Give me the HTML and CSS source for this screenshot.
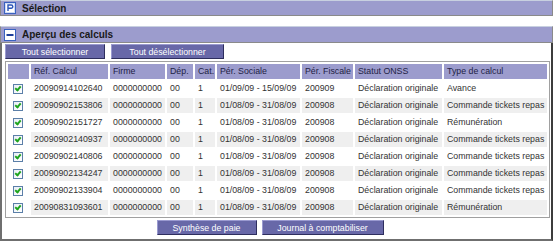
FILE: index.html
```html
<!DOCTYPE html>
<html>
<head>
<meta charset="utf-8">
<link rel="stylesheet" href="styles.css">
</head>
<body>
<div class="page">
  <div class="bar bar-top">
    <svg class="ico" width="12" height="12" viewBox="0 0 12 12"><rect x="0.5" y="0.5" width="11" height="11" fill="#cfdcf5" stroke="#3a62c0"/><rect x="2" y="2" width="8" height="8" fill="#ffffff"/><path d="M4 9V3h3.2a1.6 1.6 0 0 1 0 3.2H4" fill="none" stroke="#2c56b8" stroke-width="1.4"/></svg>
    <span class="bar-title">Sélection</span>
  </div>

  <div class="bar bar-second">
    <svg class="ico" width="12" height="12" viewBox="0 0 12 12"><rect x="0.5" y="0.5" width="11" height="11" fill="#ffffff" stroke="#3a62c0"/><rect x="2.5" y="5" width="7" height="2" fill="#1f3f9a"/></svg>
    <span class="bar-title">Aperçu des calculs</span>
  </div>
  <div class="panel">
    <div class="btn-row">
      <button class="btn w100">Tout sélectionner</button>
      <button class="btn w113">Tout désélectionner</button>
    </div>
    <table class="grid">
      <colgroup>
        <col class="c-chk"><col class="c-ref"><col class="c-firm"><col class="c-dep"><col class="c-cat"><col class="c-soc"><col class="c-fis"><col class="c-stat"><col class="c-type">
      </colgroup>
      <thead>
        <tr><th></th><th>Réf. Calcul</th><th>Firme</th><th>Dép.</th><th>Cat.</th><th>Pér. Sociale</th><th>Pér. Fiscale</th><th>Statut ONSS</th><th>Type de calcul</th></tr>
      </thead>
      <tbody>
        <tr><td class="chk"><span class="cb"></span></td><td>20090914102640</td><td>0000000000</td><td>00</td><td>1</td><td>01/09/09 - 15/09/09</td><td>200909</td><td>Déclaration originale</td><td>Avance</td></tr>
        <tr class="alt"><td class="chk"><span class="cb"></span></td><td>20090902153806</td><td>0000000000</td><td>00</td><td>1</td><td>01/08/09 - 31/08/09</td><td>200908</td><td>Déclaration originale</td><td>Commande tickets repas</td></tr>
        <tr><td class="chk"><span class="cb"></span></td><td>20090902151727</td><td>0000000000</td><td>00</td><td>1</td><td>01/08/09 - 31/08/09</td><td>200908</td><td>Déclaration originale</td><td>Rémunération</td></tr>
        <tr class="alt"><td class="chk"><span class="cb"></span></td><td>20090902140937</td><td>0000000000</td><td>00</td><td>1</td><td>01/08/09 - 31/08/09</td><td>200908</td><td>Déclaration originale</td><td>Commande tickets repas</td></tr>
        <tr><td class="chk"><span class="cb"></span></td><td>20090902140806</td><td>0000000000</td><td>00</td><td>1</td><td>01/08/09 - 31/08/09</td><td>200908</td><td>Déclaration originale</td><td>Commande tickets repas</td></tr>
        <tr class="alt"><td class="chk"><span class="cb"></span></td><td>20090902134247</td><td>0000000000</td><td>00</td><td>1</td><td>01/08/09 - 31/08/09</td><td>200908</td><td>Déclaration originale</td><td>Commande tickets repas</td></tr>
        <tr><td class="chk"><span class="cb"></span></td><td>20090902133904</td><td>0000000000</td><td>00</td><td>1</td><td>01/08/09 - 31/08/09</td><td>200908</td><td>Déclaration originale</td><td>Commande tickets repas</td></tr>
        <tr class="alt"><td class="chk"><span class="cb"></span></td><td>20090831093601</td><td>0000000000</td><td>00</td><td>1</td><td>01/08/09 - 31/08/09</td><td>200908</td><td>Déclaration originale</td><td>Rémunération</td></tr>
      </tbody>
    </table>
    <div class="btn-row center">
      <button class="btn w100">Synthèse de paie</button>
      <button class="btn w122">Journal à comptabiliser</button>
    </div>
  </div>
</div>
</body>
</html>
```

FILE: styles.css
```css
html, body {
  margin: 0;
  padding: 0;
  background: #ffffff;
}
body {
  font-family: "Liberation Sans", Arial, sans-serif;
  font-size: 8.8px;
  color: #333333;
}
.page {
  width: 553px;
}
.bar {
  display: flex;
  align-items: center;
  gap: 6px;
  height: 14px;
  padding-left: 3px;
  background: #9c9ccd;
  border: 1px solid #8a8a8a;
  border-top-color: #c8d0e0;
}
.bar-top {
  margin-bottom: 10px;
}
.bar-second {
  height: 15px;
}
.bar-title {
  font-size: 10px;
  font-weight: bold;
  color: #1a1a1a;
}
.ico {
  display: block;
  flex: none;
}
.panel {
  border: 2px solid #6f6f6f;
  border-top: none;
  border-right-color: #3c3c3c;
  padding: 1px 1px 4px 3px;
}
.btn-row {
  display: flex;
  gap: 6px;
}
.btn-row.center {
  justify-content: center;
  gap: 5px;
  margin-top: 2px;
  padding-right: 15px;
}
.btn {
  font-family: "Liberation Sans", Arial, sans-serif;
  font-size: 8.8px;
  color: #ffffff;
  background: #6868a8;
  height: 15px;
  padding: 0;
  margin: 0;
  border: 1px solid;
  border-color: #9a9ad0 #2e2e5e #2e2e5e #9a9ad0;
  line-height: 12px;
}
.w100 { width: 100px; }
.w113 { width: 113px; }
.w122 { width: 122px; }
.grid {
  margin-top: 2px;
  width: 100%;
  table-layout: fixed;
  border-collapse: separate;
  border-spacing: 2px;
  border: 1px solid #a0a0a0;
}
.c-chk { width: 21px; }
.c-ref { width: 77px; }
.c-firm { width: 55px; }
.c-dep { width: 26px; }
.c-cat { width: 20px; }
.c-soc { width: 83px; }
.c-fis { width: 51px; }
.c-stat { width: 87px; }
.c-type { width: auto; }
.grid th, .grid td {
  height: 15px;
  padding: 0 0 0 3px;
  white-space: nowrap;
  overflow: hidden;
  text-align: left;
  font-weight: normal;
  line-height: 15px;
}
.grid th {
  background: #9c9ccd;
  color: #222244;
}
.grid tr.alt td {
  background: #efefef;
}
.grid tr.alt td.chk {
  background: #ffffff;
}
.grid td.chk {
  padding-left: 5px;
}
.cb {
  display: block;
  width: 8px;
  height: 8px;
  border: 1px solid #5b7fa8;
  background: linear-gradient(135deg, #e8eef6, #ffffff);
  position: relative;
}
.cb::after {
  content: "";
  position: absolute;
  left: 2px;
  top: 0px;
  width: 2px;
  height: 4px;
  border: solid #1fa51f;
  border-width: 0 2px 2px 0;
  transform: rotate(40deg);
}
```
